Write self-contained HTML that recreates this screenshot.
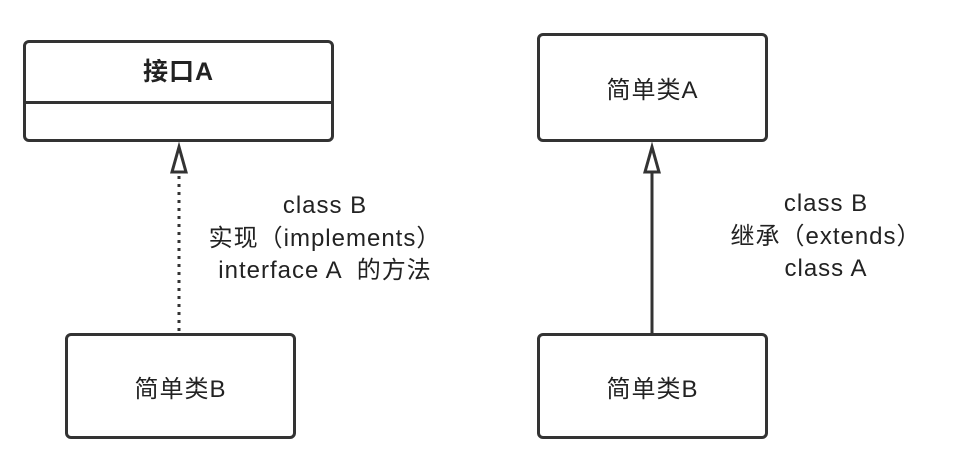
<!DOCTYPE html>
<html><head><meta charset="utf-8"><style>
body{margin:0;width:972px;height:476px;background:#fff;overflow:hidden;position:relative;font-family:"Liberation Sans","Noto Sans CJK SC",sans-serif;color:#222}
.b{position:absolute;border:3px solid #333;border-radius:6px;box-sizing:border-box;display:flex;align-items:center;justify-content:center;font-size:24px;letter-spacing:1px}
.t{position:absolute;font-size:24px;letter-spacing:1px;text-align:center;line-height:32.5px;white-space:pre}
</style></head><body>
<div class="b" style="left:23px;top:40px;width:311px;height:102px;display:block">
 <div style="height:58px;line-height:58px;text-align:center;font-weight:bold;font-size:25px;border-bottom:3px solid #333">接口A</div>
</div>
<div class="b" style="left:537px;top:33px;width:231px;height:109px">简单类A</div>
<div class="b" style="left:65px;top:333px;width:231px;height:106px">简单类B</div>
<div class="b" style="left:537px;top:333px;width:231px;height:106px">简单类B</div>
<svg style="position:absolute;left:0;top:0" width="972" height="476">
 <line x1="179" y1="176" x2="179" y2="333" stroke="#333" stroke-width="3" stroke-dasharray="3,5"/>
 <polygon points="179,147 172,172 186,172" fill="#fff" stroke="#333" stroke-width="3"/>
 <line x1="652" y1="172" x2="652" y2="333" stroke="#333" stroke-width="3"/>
 <polygon points="652,147 645,172 659,172" fill="#fff" stroke="#333" stroke-width="3"/>
</svg>
<div class="t" style="left:175px;width:300px;top:190px">class B
实现（implements）
interface A  的方法</div>
<div class="t" style="left:686px;width:280px;top:188px">class B
继承（extends）
class A</div>
</body></html>
